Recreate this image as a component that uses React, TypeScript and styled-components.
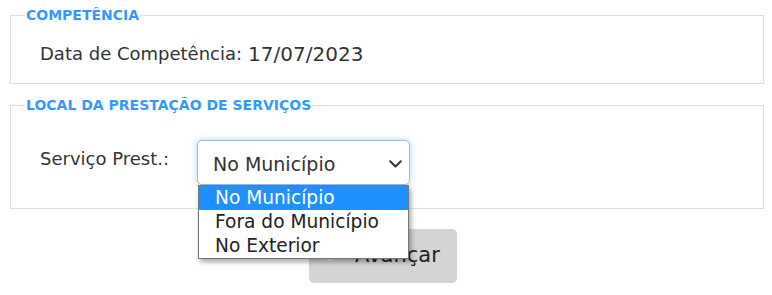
import React from "react";
import styled, { createGlobalStyle } from "styled-components";

const GlobalStyle = createGlobalStyle`
    body {
        margin: 0;
        background: #fff;
        font-family: "DejaVu Sans", Verdana, sans-serif;
        color: #333;
    }
`;

const options = ["No Município", "Fora do Município", "No Exterior"];

const App: React.FC = () => {
    const [selected, setSelected] = React.useState(0);
    const [open, setOpen] = React.useState(true);
    return (
        <>
            <GlobalStyle />
            <Page>
                <Section $height={77}>
                    <Legend>COMPETÊNCIA</Legend>
                    <Row $top={19}>
                        <Label>Data de Competência:</Label>
                        <Value>17/07/2023</Value>
                    </Row>
                </Section>
                <Section $height={112}>
                    <Legend>LOCAL DA PRESTAÇÃO DE SERVIÇOS</Legend>
                    <Row $top={27}>
                        <Label $width={157} $offset={7}>
                            Serviço Prest.:
                        </Label>
                        <SelectWrap>
                            <SelectBox onClick={() => setOpen(!open)}>
                                <span>{options[selected]}</span>
                                <svg width="13" height="8" viewBox="0 0 13 8">
                                    <path
                                        d="M1.2 1.2l5.3 5.3 5.3-5.3"
                                        fill="none"
                                        stroke="#333"
                                        strokeWidth="2"
                                        strokeLinecap="round"
                                        strokeLinejoin="round"
                                    />
                                </svg>
                            </SelectBox>
                            {open && (
                                <OptionList>
                                    {options.map((o, i) => (
                                        <OptionItem
                                            key={o}
                                            $active={i === selected}
                                            onClick={() => {
                                                setSelected(i);
                                                setOpen(false);
                                            }}
                                        >
                                            {o}
                                        </OptionItem>
                                    ))}
                                </OptionList>
                            )}
                        </SelectWrap>
                    </Row>
                </Section>
                <Actions>
                    <NextButton>
                        <svg width="14" height="16" viewBox="0 0 14 16">
                            <path
                                d="M3 3l7 5-7 5"
                                fill="none"
                                stroke="#ececec"
                                strokeWidth="2.5"
                                strokeLinecap="round"
                            />
                        </svg>
                        Avançar
                    </NextButton>
                </Actions>
            </Page>
        </>
    );
};

const Page = styled.div`
    padding: 7px 8px 0 10px;
    display: flex;
    flex-direction: column;
    gap: 13px;
`;

const Section = styled.fieldset<{ $height: number }>`
    margin: 0;
    padding: 0 0 0 14px;
    height: ${(p) => p.$height}px;
    box-sizing: border-box;
    border: 1px solid #dedede;
    min-width: 0;
`;

const Legend = styled.legend`
    padding: 0 1px;
    font-size: 14px;
    font-weight: bold;
    color: #3399ff;
`;

const Row = styled.div<{ $top: number }>`
    display: flex;
    align-items: flex-start;
    padding-top: ${(p) => p.$top}px;
    padding-left: 15px;
`;

const Label = styled.div<{ $width?: number; $offset?: number }>`
    font-size: 18px;
    line-height: 24px;
    color: #333;
    padding-top: ${(p) => p.$offset ?? 0}px;
    ${(p) => (p.$width ? `width: ${p.$width}px;` : "margin-right: 6px;")}
`;

const Value = styled.div`
    font-size: 20px;
    line-height: 24px;
    color: #333;
`;

const SelectWrap = styled.div`
    position: relative;
`;

const SelectBox = styled.div`
    width: 213px;
    height: 45px;
    box-sizing: border-box;
    border: 1px solid #92c0ec;
    border-radius: 5px;
    box-shadow: 0 0 6px rgba(102, 175, 233, 0.55);
    display: flex;
    align-items: center;
    justify-content: space-between;
    padding: 2px 7px 0 15px;
    font-size: 19px;
    color: #333;
    cursor: pointer;
    background: #fff;
`;

const OptionList = styled.div`
    position: absolute;
    top: 45px;
    left: 1px;
    width: 211px;
    box-sizing: border-box;
    background: #fff;
    border: 1px solid #767676;
    box-shadow: 2px 3px 5px rgba(0, 0, 0, 0.35);
    z-index: 5;
`;

const OptionItem = styled.div<{ $active: boolean }>`
    height: 24px;
    line-height: 24px;
    padding-left: 16px;
    font-size: 18.6px;
    color: ${(p) => (p.$active ? "#fff" : "#222")};
    background: ${(p) => (p.$active ? "#1e90ff" : "#fff")};
    cursor: default;
`;

const Actions = styled.div`
    display: flex;
    justify-content: center;
    padding-top: 7px;
    padding-right: 8px;
`;

const NextButton = styled.button`
    width: 148px;
    height: 54px;
    border: none;
    border-radius: 5px;
    background: #d4d4d4;
    display: flex;
    align-items: center;
    gap: 15px;
    padding: 0 0 2px 17px;
    font-family: "DejaVu Sans", Verdana, sans-serif;
    font-size: 21px;
    color: #222;
`;

export default App;
